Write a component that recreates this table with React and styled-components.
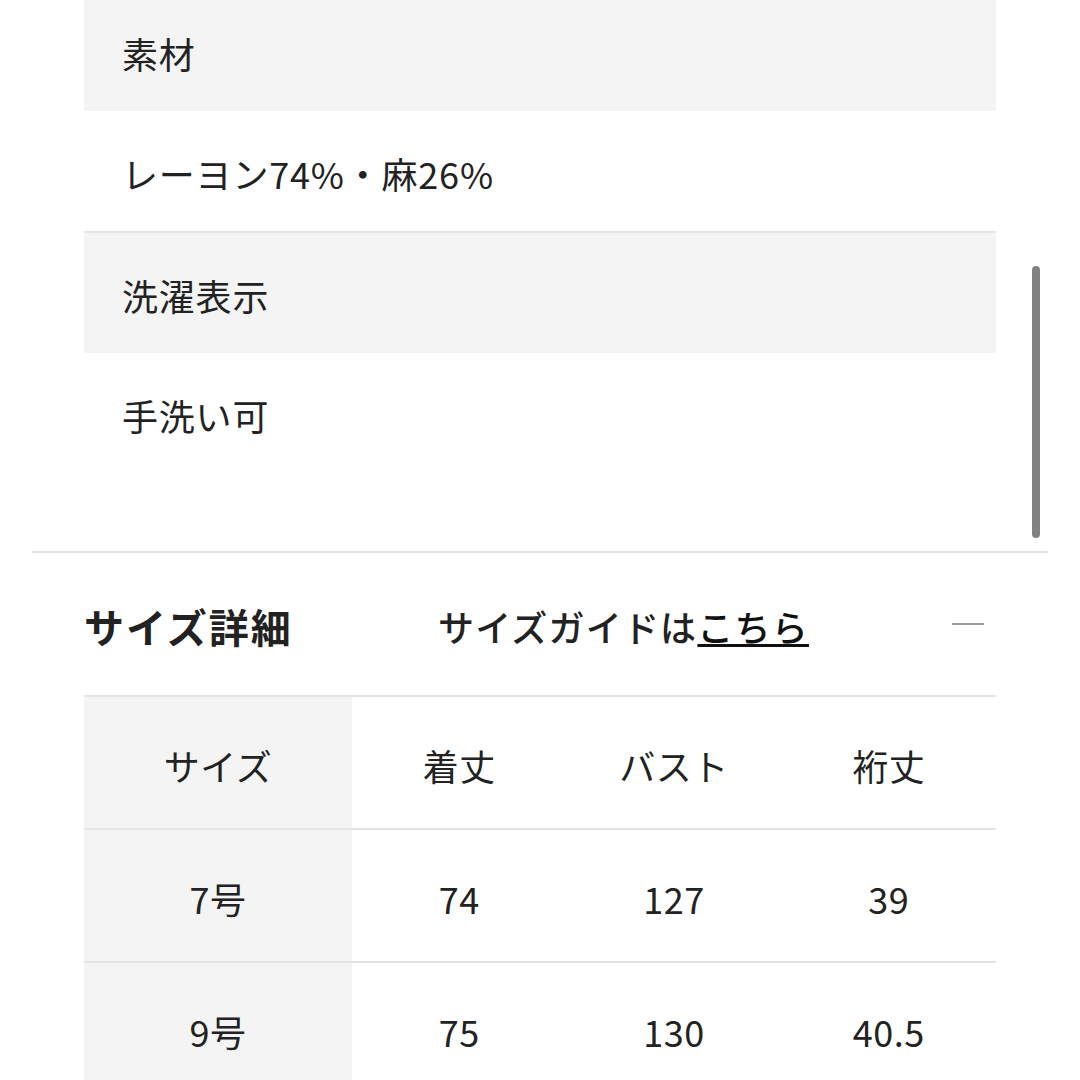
import React from "react";
import styled, { createGlobalStyle } from "styled-components";

const Global = createGlobalStyle`
  html, body {
    margin: 0;
    padding: 0;
    background: #ffffff;
  }
  body {
    font-family: "Noto Sans CJK JP", "Noto Sans", sans-serif;
    color: #222222;
    overflow: hidden;
  }
`;

const Page = styled.div`
  position: relative;
  width: 1080px;
  height: 1080px;
  overflow: hidden;
  background: #fff;
`;

const SpecList = styled.div`
  margin: -9px 84px 0;
  display: flex;
  flex-direction: column;
`;

const SpecRow = styled.div`
  box-sizing: content-box;
  display: flex;
  align-items: center;
  padding-left: 38px;
  font-size: 36px;
  letter-spacing: 0.8px;
  line-height: 1;
  padding-top: 4px;
  height: 116px;
  background: ${(p) => (p.$label ? "#f4f4f4" : "#ffffff")};
  border-bottom: ${(p) => (p.$divided ? "2px solid #e4e4e4" : "none")};
`;

const Divider = styled.div`
  margin: 78px 32px 0;
  height: 2px;
  background: #e4e4e4;
`;

const Header = styled.div`
  display: flex;
  align-items: center;
  height: 142px;
  padding: 0 96px 0 84px;
`;

const Title = styled.h2`
  margin: 0;
  width: 354px;
  font-size: 40px;
  font-weight: 700;
  letter-spacing: 2px;
  line-height: 1;
  color: #222;
  padding-top: 4px;
`;

const Guide = styled.div`
  font-size: 36px;
  font-weight: 500;
  letter-spacing: 1.2px;
  line-height: 1;
  padding-top: 4px;
  color: #222;
`;

const GuideLink = styled.a`
  color: #111;
  text-decoration: underline;
  text-decoration-thickness: 3px;
  text-underline-offset: 2px;
`;

const Collapse = styled.span`
  margin-left: auto;
  width: 32px;
  height: 2px;
  background: #9a9a9a;
`;

const Table = styled.div`
  margin: 0 84px;
  display: grid;
  grid-template-columns: 268px repeat(3, 1fr);
`;

const Cell = styled.div`
  border-top: 2px solid #e4e4e4;
  display: flex;
  align-items: center;
  justify-content: center;
  font-size: 36px;
  letter-spacing: 0.5px;
  line-height: 1;
  padding-top: 4px;
  box-sizing: border-box;
  height: 133px;
  background: ${(p) => (p.$head ? "#f4f4f4" : "#ffffff")};
`;

const Scrollbar = styled.div`
  position: absolute;
  left: 1032px;
  top: 266px;
  width: 8px;
  height: 272px;
  border-radius: 4px;
  background: #828282;
`;

const specs = [
  { label: "素材", value: "レーヨン74%・麻26%" },
  { label: "洗濯表示", value: "手洗い可" },
];

const rows = [
  ["サイズ", "着丈", "バスト", "裄丈"],
  ["7号", "74", "127", "39"],
  ["9号", "75", "130", "40.5"],
];

export default function App() {
  return (
    <Page>
      <Global />
      <SpecList>
        {specs.map((s, i) => (
          <React.Fragment key={s.label}>
            <SpecRow $label>{s.label}</SpecRow>
            <SpecRow $divided={i < specs.length - 1}>{s.value}</SpecRow>
          </React.Fragment>
        ))}
      </SpecList>
      <Divider />
      <Header>
        <Title>サイズ詳細</Title>
        <Guide>
          サイズガイドは<GuideLink href="#">こちら</GuideLink>
        </Guide>
        <Collapse />
      </Header>
      <Table>
        {rows.map((r, ri) =>
          r.map((c, ci) => (
            <Cell key={ri + "-" + ci} $head={ci === 0}>
              {c}
            </Cell>
          ))
        )}
      </Table>
      <Scrollbar />
    </Page>
  );
}
